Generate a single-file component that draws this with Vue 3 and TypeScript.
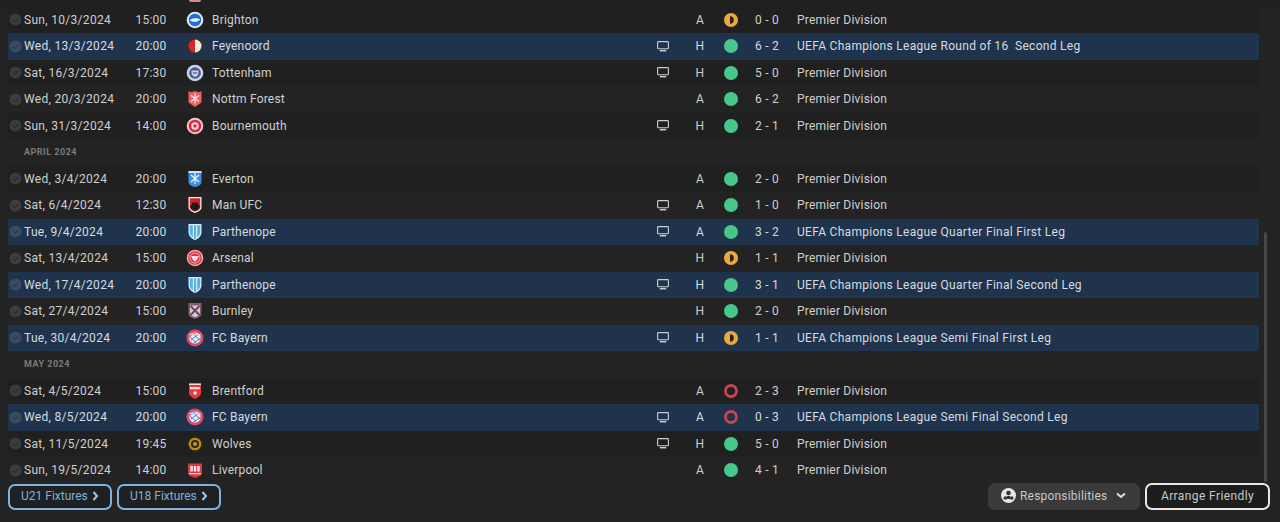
<script setup lang="ts">
type Crest = 'brighton' | 'feyenoord' | 'spurs' | 'forest' | 'bournemouth' | 'everton' | 'manufc' | 'parthenope' | 'arsenal' | 'burnley' | 'bayern' | 'brentford' | 'wolves' | 'liverpool'
interface Fixture { kind: 'match'; date: string; time: string; crest: Crest; team: string; tv: boolean; venue: string; res: 'w' | 'd' | 'l'; score: string; comp: string; euro: boolean }
interface Heading { kind: 'head'; label: string }

const m = (date: string, time: string, crest: Crest, team: string, tv: boolean, venue: string, res: 'w' | 'd' | 'l', score: string, comp: string): Fixture => ({
  kind: 'match', date, time, crest, team, tv, venue, res, score, comp, euro: comp.startsWith('UEFA'),
})
const PD = 'Premier Division'
const rows: (Fixture | Heading)[] = [
  m('Sun, 10/3/2024', '15:00', 'brighton', 'Brighton', false, 'A', 'd', '0 - 0', PD),
  m('Wed, 13/3/2024', '20:00', 'feyenoord', 'Feyenoord', true, 'H', 'w', '6 - 2', 'UEFA Champions League Round of 16  Second Leg'),
  m('Sat, 16/3/2024', '17:30', 'spurs', 'Tottenham', true, 'H', 'w', '5 - 0', PD),
  m('Wed, 20/3/2024', '20:00', 'forest', 'Nottm Forest', false, 'A', 'w', '6 - 2', PD),
  m('Sun, 31/3/2024', '14:00', 'bournemouth', 'Bournemouth', true, 'H', 'w', '2 - 1', PD),
  { kind: 'head', label: 'APRIL 2024' },
  m('Wed, 3/4/2024', '20:00', 'everton', 'Everton', false, 'A', 'w', '2 - 0', PD),
  m('Sat, 6/4/2024', '12:30', 'manufc', 'Man UFC', true, 'A', 'w', '1 - 0', PD),
  m('Tue, 9/4/2024', '20:00', 'parthenope', 'Parthenope', true, 'A', 'w', '3 - 2', 'UEFA Champions League Quarter Final First Leg'),
  m('Sat, 13/4/2024', '15:00', 'arsenal', 'Arsenal', false, 'H', 'd', '1 - 1', PD),
  m('Wed, 17/4/2024', '20:00', 'parthenope', 'Parthenope', true, 'H', 'w', '3 - 1', 'UEFA Champions League Quarter Final Second Leg'),
  m('Sat, 27/4/2024', '15:00', 'burnley', 'Burnley', false, 'H', 'w', '2 - 0', PD),
  m('Tue, 30/4/2024', '20:00', 'bayern', 'FC Bayern', true, 'H', 'd', '1 - 1', 'UEFA Champions League Semi Final First Leg'),
  { kind: 'head', label: 'MAY 2024' },
  m('Sat, 4/5/2024', '15:00', 'brentford', 'Brentford', false, 'A', 'l', '2 - 3', PD),
  m('Wed, 8/5/2024', '20:00', 'bayern', 'FC Bayern', true, 'A', 'l', '0 - 3', 'UEFA Champions League Semi Final Second Leg'),
  m('Sat, 11/5/2024', '19:45', 'wolves', 'Wolves', true, 'H', 'w', '5 - 0', PD),
  m('Sun, 19/5/2024', '14:00', 'liverpool', 'Liverpool', false, 'A', 'w', '4 - 1', PD),
]
</script>

<template>
  <div class="page">
    <div class="sliver"><span class="sliver-crest"></span></div>
    <div class="list">
      <template v-for="(r, i) in rows" :key="i">
        <div v-if="r.kind === 'head'" class="head">{{ r.label }}</div>
        <div v-else class="row" :class="{ euro: r.euro }">
          <span class="check">
            <svg width="13" height="13" viewBox="0 0 13 13"><circle cx="6.5" cy="6.5" r="6" fill="#fff" fill-opacity=".12" /><path d="M3.8 6.8l2 2 3.6-4" fill="none" stroke="#000" stroke-opacity=".22" stroke-width="1.3" /></svg>
          </span>
          <span class="date">{{ r.date }}</span>
          <span class="time">{{ r.time }}</span>
          <span class="crest">
            <svg width="18" height="18" viewBox="0 0 18 18">
              <template v-if="r.crest === 'brighton'">
                <circle cx="9" cy="9" r="8.3" fill="#dbe6f4" /><circle cx="9" cy="9" r="6.2" fill="#1f6fd0" /><path d="M3.8 9.4c2-2.4 7-2.8 10.4-1.2-1.6 2.6-6.4 3.6-10.4 1.2z" fill="#f2f6fb" />
              </template>
              <template v-else-if="r.crest === 'feyenoord'">
                <circle cx="9" cy="9" r="8.5" fill="#3a2f2c" /><path d="M9 2.5a6.5 6.5 0 0 0 0 13z" fill="#d8262c" /><path d="M9 2.5a6.5 6.5 0 0 1 0 13z" fill="#f0ece8" />
              </template>
              <template v-else-if="r.crest === 'spurs'">
                <circle cx="9" cy="9" r="8.3" fill="#c9d3ea" /><circle cx="9" cy="9" r="5.8" fill="#48598f" /><path d="M5.5 6.5h7v2.6c0 2-1.6 3.3-3.5 3.9-1.9-.6-3.5-1.9-3.5-3.9z" fill="#c9d3ea" /><path d="M6.8 9h4.400" stroke="#48598f" stroke-width="1.2" />
              </template>
              <template v-else-if="r.crest === 'forest'">
                <path d="M2.500 1l2.500 1.200L9 1l4 1.200L15.500 1v11.500L9 17l-6.500-4.500z" fill="#ee5f68" /><path d="M9 3.500v10M5 5.500l8 6M13 5.500l-8 6" stroke="#fde3e4" stroke-width="1.300" />
              </template>
              <template v-else-if="r.crest === 'bournemouth'">
                <circle cx="9" cy="9" r="8.3" fill="#f3c6cc" /><circle cx="9" cy="9" r="6.300" fill="#d92d45" /><circle cx="9" cy="9" r="3.700" fill="#f8dfe2" /><circle cx="9" cy="9" r="1.800" fill="#d92d45" />
              </template>
              <template v-else-if="r.crest === 'everton'">
                <path d="M2.500 1h13v11c0 2.500-3 4.200-6.500 5-3.500-.8-6.500-2.500-6.500-5z" fill="#3f8fdc" /><path d="M9 3v11M5 5l8 7M13 5l-8 7" stroke="#e6f1fb" stroke-width="1.300" /><path d="M2.500 1h13v2h-13z" fill="#cfe3f7" />
              </template>
              <template v-else-if="r.crest === 'manufc'">
                <path d="M2.500 1h13v10.500c0 2.500-3.500 4.500-6.500 5.500-3-1-6.500-3-6.500-5.500z" fill="#eee" /><path d="M3.800 2.300h10.400v8.900c0 2-3 3.600-5.200 4.400-2.200-.8-5.200-2.400-5.200-4.400z" fill="#d61f26" /><path d="M4.500 9h9v2.500c0 1.500-2.800 2.800-4.500 3.400-1.700-.6-4.500-1.900-4.500-3.400z" fill="#1a1a1a" /><path d="M6 6.500h6V9H6z" fill="#1a1a1a" />
              </template>
              <template v-else-if="r.crest === 'parthenope'">
                <path d="M2.500 1h13v8c0 4-3 6.800-6.500 8-3.500-1.200-6.500-4-6.500-8z" fill="#d5ebf7" /><path d="M3.800 2.300h3v12c-1.800-1.300-3-3.200-3-5.300zM11.200 2.300h3V9c0 2.100-1.200 4-3 5.300z" fill="#53b4e8" /><path d="M8 2.300h2v13.400l-1 .4-1-.4z" fill="#53b4e8" />
              </template>
              <template v-else-if="r.crest === 'arsenal'">
                <circle cx="9" cy="9" r="8.300" fill="#f2a5ad" /><circle cx="9" cy="9" r="6.800" fill="#dc3243" /><circle cx="9" cy="9" r="5" fill="none" stroke="#f6ccd0" stroke-width=".8" /><path d="M5.200 7h7.600l-1 2.600c-.5 1.400-1.500 2.400-2.800 2.900-1.300-.5-2.300-1.500-2.800-2.900z" fill="#f8dfe2" />
              </template>
              <template v-else-if="r.crest === 'burnley'">
                <path d="M2.500 1h13v11c0 2.300-3 4-6.500 5-3.500-1-6.500-2.700-6.500-5z" fill="#8a5668" /><path d="M4 3.500h10v8c0 1.700-2.600 3-5 3.800-2.400-.8-5-2.100-5-3.800z" fill="#bdd4e4" /><path d="M4.500 4l9 9M13.500 4l-9 9" stroke="#7c3f55" stroke-width="2" />
              </template>
              <template v-else-if="r.crest === 'bayern'">
                <circle cx="9" cy="9" r="8.500" fill="#e2485e" /><circle cx="9" cy="9" r="5.800" fill="#f0eef2" /><path d="M3.500 7.500L10 3.500M5 11l8-6M7.500 14L15 9M3.500 7.500l7 6.500M6.500 4.500l7.500 6.500" stroke="#3f83cc" stroke-width="1" fill="none" /><path d="M3.300 5.500h11.400" stroke="#f3c6ce" stroke-width="1.300" />
              </template>
              <template v-else-if="r.crest === 'brentford'">
                <path d="M3 1.500h12v9.500c0 2.800-3.300 4.800-6 6-2.700-1.200-6-3.200-6-6z" fill="#ea3a3c" /><path d="M3 1.500h12v1.500H3zM4 5h10v2.200H4z" fill="#f8d8d8" /><circle cx="9" cy="11" r="1.800" fill="#fde9e9" />
              </template>
              <template v-else-if="r.crest === 'wolves'">
                <circle cx="9" cy="9" r="8.300" fill="#2d2614" /><circle cx="9" cy="9" r="6.300" fill="#b98c1e" /><circle cx="9" cy="9" r="4" fill="#2e2610" /><circle cx="9" cy="9" r="2.100" fill="#c7982a" />
              </template>
              <template v-else>
                <path d="M2 2.500h14v9.500c0 2-3.500 3.800-7 5-3.500-1.200-7-3-7-5z" fill="#d93844" /><path d="M4.300 5h2.500v5.400H4.300zM7.800 5h2.400v5.400H7.800zM11.200 5h2.500v5.400h-2.500z" fill="#fbe4e6" /><path d="M3 12h12v1.300H3z" fill="#f6c8cc" />
              </template>
            </svg>
          </span>
          <span class="team">{{ r.team }}</span>
          <span class="tv">
            <svg v-if="r.tv" width="12" height="11" viewBox="0 0 12 11"><rect x=".6" y=".6" width="10.800" height="7.200" rx=".8" fill="none" stroke="#c8ced4" stroke-width="1.100" /><path d="M2.800 9.700h6.400" stroke="#c8ced4" stroke-width="1.500" /></svg>
          </span>
          <span class="venue">{{ r.venue }}</span>
          <span class="res">
            <svg v-if="r.res === 'w'" width="14" height="14" viewBox="0 0 14 14"><circle cx="7" cy="7" r="7" fill="#48c78a" /></svg>
            <svg v-else-if="r.res === 'd'" width="14" height="14" viewBox="0 0 14 14"><circle cx="7" cy="7" r="7" fill="#e9a940" /><path d="M6 3.200a3.800 3.800 0 0 1 0 7.600z" fill="#2b2215" /></svg>
            <svg v-else width="14" height="14" viewBox="0 0 14 14"><circle cx="7" cy="7" r="5.500" fill="none" stroke="#c9444f" stroke-width="2.800" /></svg>
          </span>
          <span class="score">{{ r.score }}</span>
          <span class="comp">{{ r.comp }}</span>
        </div>
      </template>
    </div>
    <div class="footer">
      <button class="link">U21 Fixtures<svg width="7" height="10" viewBox="0 0 7 10"><path d="M1.500 1l3.500 4-3.500 4" fill="none" stroke="#9cc8ea" stroke-width="2" /></svg></button>
      <button class="link">U18 Fixtures<svg width="7" height="10" viewBox="0 0 7 10"><path d="M1.500 1l3.500 4-3.500 4" fill="none" stroke="#9cc8ea" stroke-width="2" /></svg></button>
      <span class="spacer"></span>
      <button class="resp">
        <svg width="15" height="15" viewBox="0 0 15 15"><circle cx="7.500" cy="7.500" r="7.500" fill="#e6e6e6" /><circle cx="7.500" cy="5" r="2.300" fill="#333" /><circle cx="4.300" cy="10" r="1.800" fill="#333" /><circle cx="10.700" cy="10" r="1.800" fill="#333" /><path d="M6 8h3v3H6z" fill="#333" /></svg>
        Responsibilities
        <svg class="chev" width="10" height="7" viewBox="0 0 10 7"><path d="M1 1.500l4 3.500 4-3.500" fill="none" stroke="#e0e0e0" stroke-width="2" /></svg>
      </button>
      <button class="arrange">Arrange Friendly</button>
    </div>
    <div class="scrollbar"></div>
  </div>
</template>

<style>
html, body { margin: 0; background: #232323; }
</style>

<style scoped>
.page {
  position: relative;
  width: 1280px;
  height: 522px;
  overflow: hidden;
  background: #232323;
  font-family: Roboto, "Liberation Sans", sans-serif;
  font-size: 12px;
  color: #cfcfcf;
  letter-spacing: 0.2px;
}
.sliver { height: 6.5px; overflow: hidden; padding-left: 189px; background: #202020; }
.sliver-crest { display: block; width: 12px; height: 2px; background: #d98a90; border-radius: 0 0 6px 6px; }
.list { margin: 0 21px 0 8px; }
.row, .head { height: 26.5px; }
.row {
  display: grid;
  grid-template-columns: 16px 104px 46px 38px 428px 46px 28px 34px 38px 1fr;
  align-items: center;
  background: #232323;
}
.row:nth-child(odd) { background: #202020; }
.row.euro { background: #1f344c; color: #d6dbe0; }
.head {
  display: flex;
  align-items: center;
  padding-left: 16px;
  font-size: 9px;
  font-weight: 700;
  letter-spacing: 0.5px;
  color: #7c7c7c;
}
.check { display: flex; padding-left: 1px; }
.date { letter-spacing: 0.3px; }
.time { text-align: center; }
.crest { display: flex; justify-content: center; padding-left: 4px; }
.crest svg { filter: blur(0.3px); }
.tv { display: flex; justify-content: center; }
.venue { text-align: center; }
.res { display: flex; justify-content: center; }
.score { text-align: center; }
.comp { padding-left: 11px; white-space: pre; }
.euro .comp { letter-spacing: 0.3px; }
.footer {
  display: flex;
  align-items: flex-end;
  height: 26px;
  margin: 0.5px 10px 0 8px;
  gap: 5px;
}
.spacer { flex: 1; }
button {
  font: inherit;
  letter-spacing: inherit;
  box-sizing: border-box;
  height: 26px;
  display: inline-flex;
  align-items: center;
  padding-bottom: 2px;
}
.link {
  width: 104px;
  padding: 0 0 2px 11px;
  gap: 4px;
  letter-spacing: 0;
  color: #7eb2dc;
  background: #1e2022;
  border: 2px solid #7fb3dd;
  border-radius: 7px;
}
.resp {
  width: 152px;
  height: 27px;
  padding: 0 0 2px 13px;
  gap: 4px;
  color: #c8c8c8;
  background: #3a3a3a;
  border: 0;
  border-radius: 7px;
}
.chev { margin-left: 5px; }
.arrange {
  width: 125px;
  height: 27px;
  justify-content: center;
  letter-spacing: 0.4px;
  color: #c8c8c8;
  background: #1d1d1d;
  border: 2px solid #e8e8e8;
  border-radius: 7px;
}
.scrollbar { position: absolute; left: 1264px; top: 232px; width: 3px; height: 250px; background: #484848; border-radius: 2px; }
</style>
